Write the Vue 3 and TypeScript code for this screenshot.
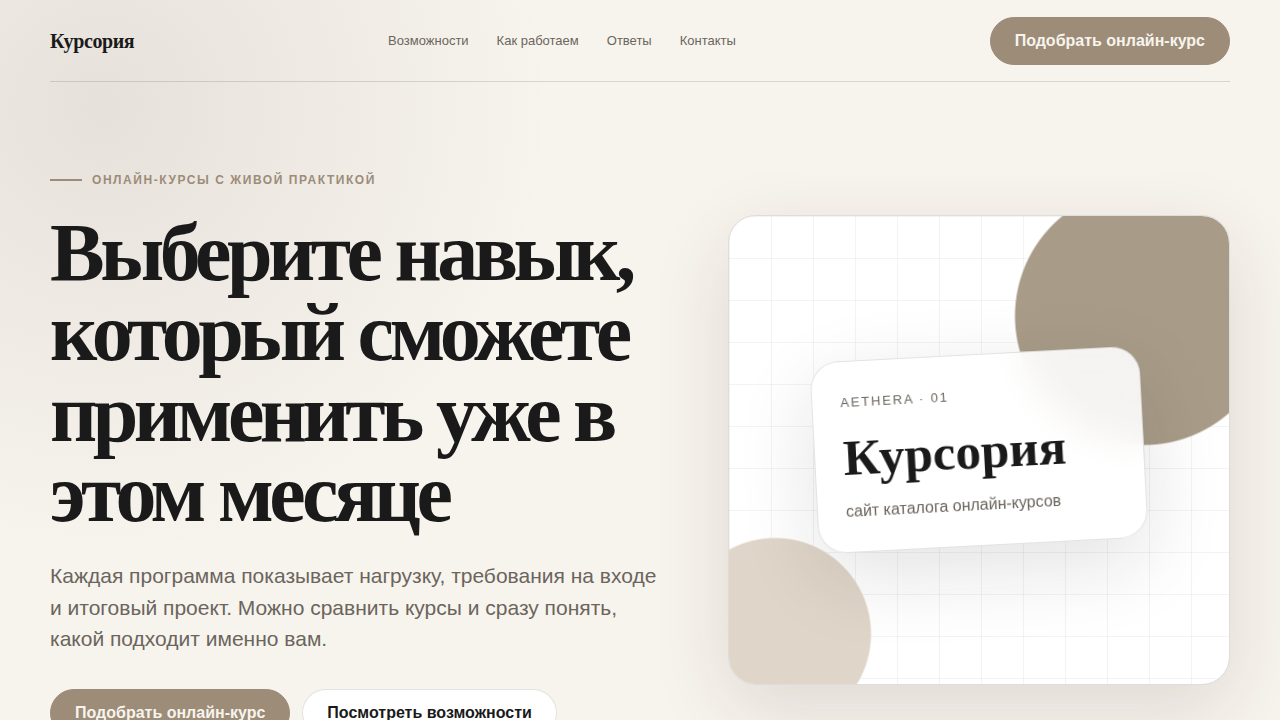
<script setup lang="ts">
interface NavLink {
  label: string
  href: string
}

const brand = 'Курсория'
const links: NavLink[] = [
  { label: 'Возможности', href: '#features' },
  { label: 'Как работаем', href: '#process' },
  { label: 'Ответы', href: '#faq' },
  { label: 'Контакты', href: '#contacts' },
]
</script>

<template>
  <div class="page">
    <header class="header">
      <a class="brand" href="#top">{{ brand }}</a>
      <nav class="nav" aria-label="Основная навигация">
        <a v-for="link in links" :key="link.href" :href="link.href">{{ link.label }}</a>
      </nav>
      <button class="button primary" type="button">Подобрать онлайн-курс</button>
    </header>

    <main id="top" class="hero">
      <section class="copy">
        <p class="eyebrow">Онлайн-курсы с живой практикой</p>
        <h1>Выберите навык, который сможете применить уже в этом месяце</h1>
        <p class="lead">
          Каждая программа показывает нагрузку, требования на входе и итоговый проект. Можно сравнить
          курсы и сразу понять, какой подходит именно вам.
        </p>
        <div class="actions">
          <button class="button primary" type="button">Подобрать онлайн-курс</button>
          <button class="button secondary" type="button">Посмотреть возможности</button>
        </div>
      </section>

      <aside class="visual">
        <div class="card">
          <span class="card-label">AETHERA · 01</span>
          <strong class="card-title">{{ brand }}</strong>
          <span class="card-text">сайт каталога онлайн-курсов</span>
        </div>
      </aside>
    </main>
  </div>
</template>

<style>
body {
  margin: 0;
  background: #f7f4ed;
}
</style>

<style scoped>
.page {
  --ink: #1a1a1a;
  --muted: #6b655d;
  --accent: #9c8c78;
  --line: rgba(26, 26, 26, 0.14);
  box-sizing: border-box;
  min-height: 100vh;
  padding: 0 50px;
  overflow: hidden;
  color: var(--ink);
  font-family: "Liberation Sans", Arial, sans-serif;
  font-size: 16px;
  background: radial-gradient(circle at 8% 108px, rgba(60, 20, 30, 0.085), transparent 450px) #f7f4ed;
}

.header {
  box-sizing: border-box;
  display: flex;
  align-items: center;
  justify-content: space-between;
  min-height: 82px;
  border-bottom: 1px solid var(--line);
}

.brand {
  color: var(--ink);
  font: 700 20px/24px "Liberation Serif", "Times New Roman", serif;
  letter-spacing: -0.02em;
  text-decoration: none;
}

.nav {
  display: flex;
  gap: 28px;
}

.nav a {
  color: var(--muted);
  font-size: 13px;
  text-decoration: none;
}

.button {
  box-sizing: border-box;
  height: 48px;
  padding: 0 24px;
  border: 1px solid transparent;
  border-radius: 24px;
  font: 700 16px/24px "Liberation Sans", Arial, sans-serif;
  white-space: nowrap;
  cursor: pointer;
}

.primary {
  border-color: var(--accent);
  background: var(--accent);
  color: #f7f4ed;
}

.secondary {
  border-color: rgba(26, 26, 26, 0.12);
  background: #fff;
  color: var(--ink);
}

.hero {
  display: grid;
  grid-template-columns: 614fr 502fr;
  align-items: center;
  gap: 64px;
  padding: 81px 0;
}

.eyebrow {
  display: flex;
  align-items: center;
  gap: 10px;
  min-height: 34px;
  margin: 0 0 16px;
  color: var(--accent);
  font-size: 12px;
  font-weight: 700;
  letter-spacing: 0.13em;
  text-transform: uppercase;
}

.eyebrow::before {
  width: 32px;
  height: 2px;
  background: currentColor;
  content: "";
}

h1 {
  margin: 0;
  font: 700 82px/0.98 "Liberation Serif", "Times New Roman", serif;
  letter-spacing: -0.055em;
}

.lead {
  margin: 26px 0 34px;
  color: var(--muted);
  font-size: 21px;
  line-height: 1.5;
}

.actions {
  display: flex;
  flex-wrap: wrap;
  gap: 12px;
}

.visual {
  box-sizing: border-box;
  display: grid;
  place-items: center;
  min-height: 470px;
  overflow: hidden;
  border: 1px solid #dfdddb;
  border-radius: 28px;
  background:
    radial-gradient(circle at 83% 100px, #a89c88 128px, transparent 130px) no-repeat,
    radial-gradient(circle at 46px 418px, #dfd5c8 95px, transparent 97px) no-repeat,
    linear-gradient(rgba(26, 26, 26, 0.05) 1px, transparent 1px) 0 0 / 42px 42px,
    linear-gradient(90deg, rgba(26, 26, 26, 0.05) 1px, transparent 1px) 0 0 / 42px 42px,
    #fff;
  background-clip: padding-box;
  box-shadow: 0 24px 80px rgba(60, 20, 30, 0.12);
}

.card {
  box-sizing: border-box;
  display: flex;
  flex-direction: column;
  width: 66%;
  min-height: 190px;
  padding: 28px;
  border: 1px solid rgba(26, 26, 26, 0.12);
  border-radius: 28px;
  background: rgba(255, 255, 255, 0.88);
  box-shadow: 0 24px 80px rgba(26, 26, 26, 0.12);
  backdrop-filter: blur(18px);
  transform: rotate(-3deg);
}

.card-label {
  color: var(--muted);
  font-size: 13px;
  line-height: 26px;
  letter-spacing: 0.14em;
}

.card-title {
  margin: 14px 0;
  font: 700 51px/56px "Liberation Serif", "Times New Roman", serif;
}

.card-text {
  color: var(--muted);
  line-height: 24px;
}
</style>
